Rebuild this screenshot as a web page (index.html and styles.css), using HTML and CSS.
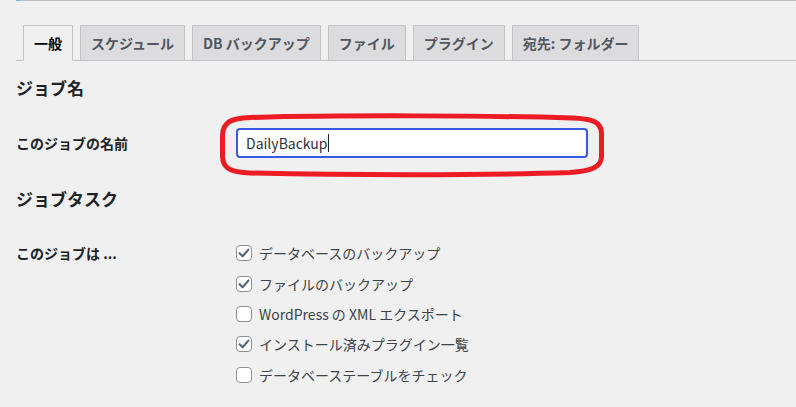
FILE: index.html
```html
<!DOCTYPE html>
<html lang="ja">
<head>
<meta charset="utf-8">
<title>ジョブ設定</title>
<link rel="stylesheet" href="styles.css">
</head>
<body>
<div class="wrap">
  <div class="topline"><span class="topline-accent"></span></div>
  <nav class="tabs">
    <span class="tab active">一般</span>
    <span class="tab">スケジュール</span>
    <span class="tab">DB バックアップ</span>
    <span class="tab">ファイル</span>
    <span class="tab">プラグイン</span>
    <span class="tab">宛先: フォルダー</span>
  </nav>

  <h2 class="heading first">ジョブ名</h2>
  <div class="row name-row">
    <div class="label">このジョブの名前</div>
    <div class="field">
      <div class="input"><span class="value">DailyBackup</span><span class="caret"></span></div>
      <svg class="annot" width="390" height="66" viewBox="0 0 390 66" aria-hidden="true">
        <path d="M30 4.5 C 120 2, 270 2.5, 352 5 C 372 5.5, 381 9, 381.5 20 L 381.5 44 C 381 55, 370 58, 350 59.5 C 260 62.5, 120 62, 30 60 C 10 59.5, 3 55, 2.5 44 L 2.5 22 C 3 10, 10 5, 30 4.5 Z" fill="none" stroke="#ed1c24" stroke-width="5"/>
      </svg>
    </div>
  </div>

  <h2 class="heading second">ジョブタスク</h2>
  <div class="row tasks-row">
    <div class="label tasks-label">このジョブは ...</div>
    <div class="checks">
      <label class="check"><span class="box on"><svg viewBox="0 0 16 16" width="16" height="16"><path d="M3.6 8.2 L6.6 11.3 L12.4 4.6" fill="none" stroke="#56677a" stroke-width="2.2" stroke-linecap="round" stroke-linejoin="round"/></svg></span>データベースのバックアップ</label>
      <label class="check"><span class="box on"><svg viewBox="0 0 16 16" width="16" height="16"><path d="M3.6 8.2 L6.6 11.3 L12.4 4.6" fill="none" stroke="#56677a" stroke-width="2.2" stroke-linecap="round" stroke-linejoin="round"/></svg></span>ファイルのバックアップ</label>
      <label class="check"><span class="box"></span>WordPress の XML エクスポート</label>
      <label class="check"><span class="box on"><svg viewBox="0 0 16 16" width="16" height="16"><path d="M3.6 8.2 L6.6 11.3 L12.4 4.6" fill="none" stroke="#56677a" stroke-width="2.2" stroke-linecap="round" stroke-linejoin="round"/></svg></span>インストール済みプラグイン一覧</label>
      <label class="check"><span class="box"></span>データベーステーブルをチェック</label>
    </div>
  </div>
</div>
</body>
</html>
```

FILE: styles.css
```css
html, body {
  margin: 0;
  padding: 0;
  background: #f0f0f1;
}
body {
  font-family: "Noto Sans CJK JP", "Noto Sans", sans-serif;
  font-size: 14px;
  color: #3c434a;
  width: 796px;
  height: 407px;
  overflow: hidden;
}
.wrap {
  padding-left: 16px;
}
.topline {
  height: 1px;
  background: #b9babd;
  display: flex;
}
.topline-accent {
  width: 4px;
  height: 1px;
  background: #72aee6;
}
.tabs {
  display: flex;
  margin-top: 24px;
  border-bottom: 1px solid #c3c4c7;
  height: 35px;
}
.tab {
  display: block;
  box-sizing: border-box;
  height: 36px;
  margin-left: 7px;
  padding: 5px 10px;
  line-height: 24px;
  font-size: 14px;
  font-weight: 600;
  color: #50575e;
  background: #dcdcde;
  border: 1px solid #c3c4c7;
  white-space: nowrap;
}
.tab.active {
  background: #f0f0f1;
  border-bottom-color: #f0f0f1;
  color: #000;
}
.heading {
  margin: 0;
  font-size: 17px;
  line-height: 24px;
  font-weight: 700;
  color: #1d2327;
}
.heading.first {
  margin-top: 15px;
}
.heading.second {
  margin-top: 29px;
}
.row {
  display: flex;
}
.name-row {
  margin-top: 28px;
  align-items: center;
}
.label {
  width: 220px;
  flex: none;
  font-weight: 600;
  color: #1d2327;
  font-size: 14px;
  line-height: 20px;
}
.field {
  position: relative;
}
.input {
  box-sizing: border-box;
  width: 352px;
  height: 30px;
  border: 2px solid #3858e9;
  border-radius: 4px;
  background: #fff;
  padding: 0 8px;
  display: flex;
  align-items: center;
  color: #2c3338;
  font-size: 14px;
}
.caret {
  display: inline-block;
  width: 1px;
  height: 18px;
  background: #1d2327;
}
.annot {
  position: absolute;
  left: -16px;
  top: -15px;
}
.tasks-row {
  margin-top: 27px;
}
.tasks-label {
  line-height: 30.4px;
  font-weight: 600;
}
.checks {
  display: flex;
  flex-direction: column;
}
.check {
  display: flex;
  align-items: center;
  height: 30.4px;
  line-height: 20px;
  color: #3c434a;
  font-size: 14px;
}
.box {
  box-sizing: border-box;
  width: 16px;
  height: 16px;
  border: 1px solid #8c8f94;
  border-radius: 4px;
  background: #fff;
  margin-right: 7px;
  flex: none;
  position: relative;
}
.box svg {
  position: absolute;
  left: -1px;
  top: -1px;
}
```
